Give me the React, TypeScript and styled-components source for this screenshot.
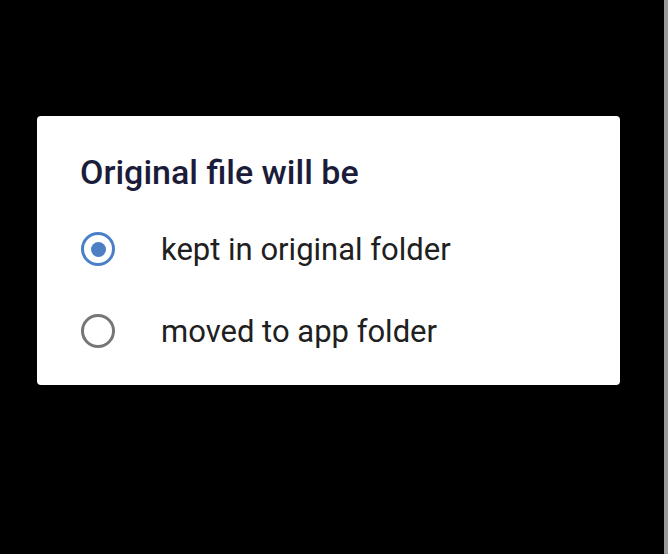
import { useState } from "react";
import styled, { createGlobalStyle } from "styled-components";

const GlobalStyle = createGlobalStyle`
  html, body {
    margin: 0;
    padding: 0;
    background: #000;
  }
  body {
    font-family: Roboto, "Noto Sans", sans-serif;
  }
`;

const Screen = styled.div`
  width: 668px;
  height: 554px;
  display: flex;
  background: #000;
`;

const Stage = styled.div`
  flex: 1;
  padding: 116px 0 0 37px;
`;

const ScrollEdge = styled.div`
  width: 4px;
  background: #9a9a9a;
`;

const Dialog = styled.div`
  width: 583px;
  height: 269px;
  box-sizing: border-box;
  background: #fff;
  border-radius: 4px;
  padding: 36px 0 0 43px;
`;

const Title = styled.h2`
  margin: 0 0 16px;
  font-size: 34px;
  font-weight: 500;
  line-height: 40px;
  color: #1b1c3a;
`;

const Option = styled.label`
  display: flex;
  align-items: center;
  height: 82px;
  cursor: pointer;
`;

const Radio = styled.span<{ $checked: boolean }>`
  width: 34px;
  height: 34px;
  box-sizing: border-box;
  border-radius: 50%;
  border: 3px solid ${(p) => (p.$checked ? "#4a80c8" : "#767676")};
  display: flex;
  align-items: center;
  justify-content: center;
  margin: 0 46px 0 1px;

  &::after {
    content: "";
    width: 15px;
    height: 15px;
    border-radius: 50%;
    background: #4c7fc4;
    display: ${(p) => (p.$checked ? "block" : "none")};
  }
`;

const OptionText = styled.span`
  font-size: 31px;
  color: #202020;
`;

const options = ["kept in original folder", "moved to app folder"];

const App = () => {
  const [selected, setSelected] = useState(0);

  return (
    <Screen>
      <GlobalStyle />
      <Stage>
        <Dialog>
          <Title>Original file will be</Title>
          {options.map((label, i) => (
            <Option key={label} onClick={() => setSelected(i)}>
              <Radio $checked={selected === i} />
              <OptionText>{label}</OptionText>
            </Option>
          ))}
        </Dialog>
      </Stage>
      <ScrollEdge />
    </Screen>
  );
};

export default App;
